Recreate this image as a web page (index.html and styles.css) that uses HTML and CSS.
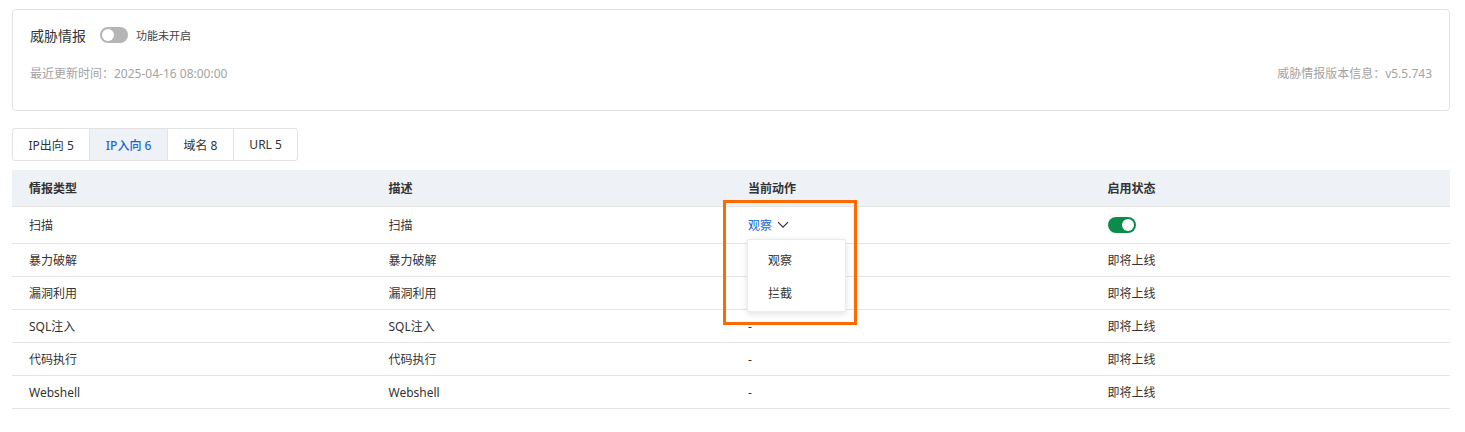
FILE: index.html
```html
<!DOCTYPE html>
<html lang="zh-CN">
<head>
<meta charset="utf-8">
<link rel="stylesheet" href="styles.css">
</head>
<body>
<div class="card">
  <div class="title-row">
    <span class="title">威胁情报</span>
    <span class="switch off"><span class="knob"></span></span>
    <span class="switch-label">功能未开启</span>
  </div>
  <div class="meta-row">
    <span>最近更新时间：2025-04-16 08:00:00</span>
    <span>威胁情报版本信息：v5.5.743</span>
  </div>
</div>

<div class="tabs">
  <div class="tab">IP出向 5</div>
  <div class="tab active">IP入向 6</div>
  <div class="tab">域名 8</div>
  <div class="tab">URL 5</div>
</div>

<div class="table">
  <div class="row head">
    <div class="cell">情报类型</div>
    <div class="cell">描述</div>
    <div class="cell">当前动作</div>
    <div class="cell">启用状态</div>
  </div>
  <div class="row first">
    <div class="cell">扫描</div>
    <div class="cell">扫描</div>
    <div class="cell action">
      <span class="trigger">观察
        <svg class="chev" width="12" height="8" viewBox="0 0 12 8"><path d="M1 1.2 L6 6.2 L11 1.2" fill="none" stroke="#333" stroke-width="1.2"/></svg>
      </span>
      <div class="menu">
        <div class="menu-item">观察</div>
        <div class="menu-item">拦截</div>
      </div>
      <div class="highlight"></div>
    </div>
    <div class="cell"><span class="switch on"><span class="knob"></span></span></div>
  </div>
  <div class="row">
    <div class="cell">暴力破解</div>
    <div class="cell">暴力破解</div>
    <div class="cell">-</div>
    <div class="cell">即将上线</div>
  </div>
  <div class="row">
    <div class="cell">漏洞利用</div>
    <div class="cell">漏洞利用</div>
    <div class="cell">-</div>
    <div class="cell">即将上线</div>
  </div>
  <div class="row">
    <div class="cell">SQL注入</div>
    <div class="cell">SQL注入</div>
    <div class="cell">-</div>
    <div class="cell">即将上线</div>
  </div>
  <div class="row">
    <div class="cell">代码执行</div>
    <div class="cell">代码执行</div>
    <div class="cell">-</div>
    <div class="cell">即将上线</div>
  </div>
  <div class="row">
    <div class="cell">Webshell</div>
    <div class="cell">Webshell</div>
    <div class="cell">-</div>
    <div class="cell">即将上线</div>
  </div>
</div>
</body>
</html>
```

FILE: styles.css
```css
* { box-sizing: border-box; }
html, body { background: #fff; }
body {
  margin: 0;
  padding: 9px 15px 0 12px;
  font-family: "Noto Sans", "Noto Sans CJK SC", sans-serif;
  font-size: 12px;
  color: #333;
}
.card {
  height: 102px;
  border: 1px solid #e3e3e3;
  border-radius: 4px;
  padding: 15px 17px 0 17px;
}
.title-row {
  display: flex;
  align-items: center;
  height: 20px;
}
.title {
  font-size: 14px;
  color: #333;
  margin-right: 14px;
}
.switch {
  position: relative;
  display: inline-block;
  width: 28px;
  height: 16px;
  border-radius: 8px;
  vertical-align: middle;
}
.switch .knob {
  position: absolute;
  top: 2px;
  width: 12px;
  height: 12px;
  border-radius: 50%;
  background: #fff;
}
.switch.off { background: #b5b5b5; }
.switch.off .knob { left: 2px; }
.switch.on { background: #0b8c4b; }
.switch.on .knob { right: 2px; }
.switch-label {
  margin-left: 8px;
  font-size: 11px;
  color: #444;
}
.meta-row {
  display: flex;
  justify-content: space-between;
  margin-top: 19px;
  height: 20px;
  line-height: 20px;
  color: #a3a3a3;
  font-size: 12px;
}
.tabs {
  display: inline-flex;
  margin-top: 17px;
  border: 1px solid #e3e3e3;
  border-radius: 3px;
  height: 33px;
}
.tab {
  display: flex;
  align-items: center;
  padding: 0 15.5px;
  white-space: nowrap;
  border-left: 1px solid #e3e3e3;
  color: #333;
}
.tab:first-child { border-left: none; }
.tab.active {
  background: #eef1f6;
  color: #1a66d6;
  font-weight: 500;
}
.table { margin-top: 9px; }
.row {
  display: grid;
  grid-template-columns: repeat(4, 1fr);
  height: 33px;
  border-bottom: 1px solid #e4e4e4;
}
.row.head {
  height: 37px;
  background: #eef1f6;
  font-weight: 600;
  color: #333;
}
.row.first { height: 37px; }
.cell {
  display: flex;
  align-items: center;
  padding-left: 17px;
}
.action { position: relative; }
.trigger {
  display: inline-flex;
  align-items: center;
  color: #1a66d6;
}
.chev { margin-left: 5px; }
.menu {
  position: absolute;
  left: 16px;
  top: 32px;
  width: 99px;
  height: 73px;
  background: #fff;
  border: 1px solid #ececec;
  border-radius: 2px;
  box-shadow: 0 2px 6px rgba(0,0,0,0.12);
  padding-top: 4px;
  z-index: 2;
}
.menu-item {
  height: 33px;
  line-height: 33px;
  padding-left: 20px;
  color: #333;
}
.highlight {
  position: absolute;
  left: -8px;
  top: -7px;
  width: 134px;
  height: 125px;
  border: 3px solid #ff6a00;
  z-index: 3;
  pointer-events: none;
}
```
